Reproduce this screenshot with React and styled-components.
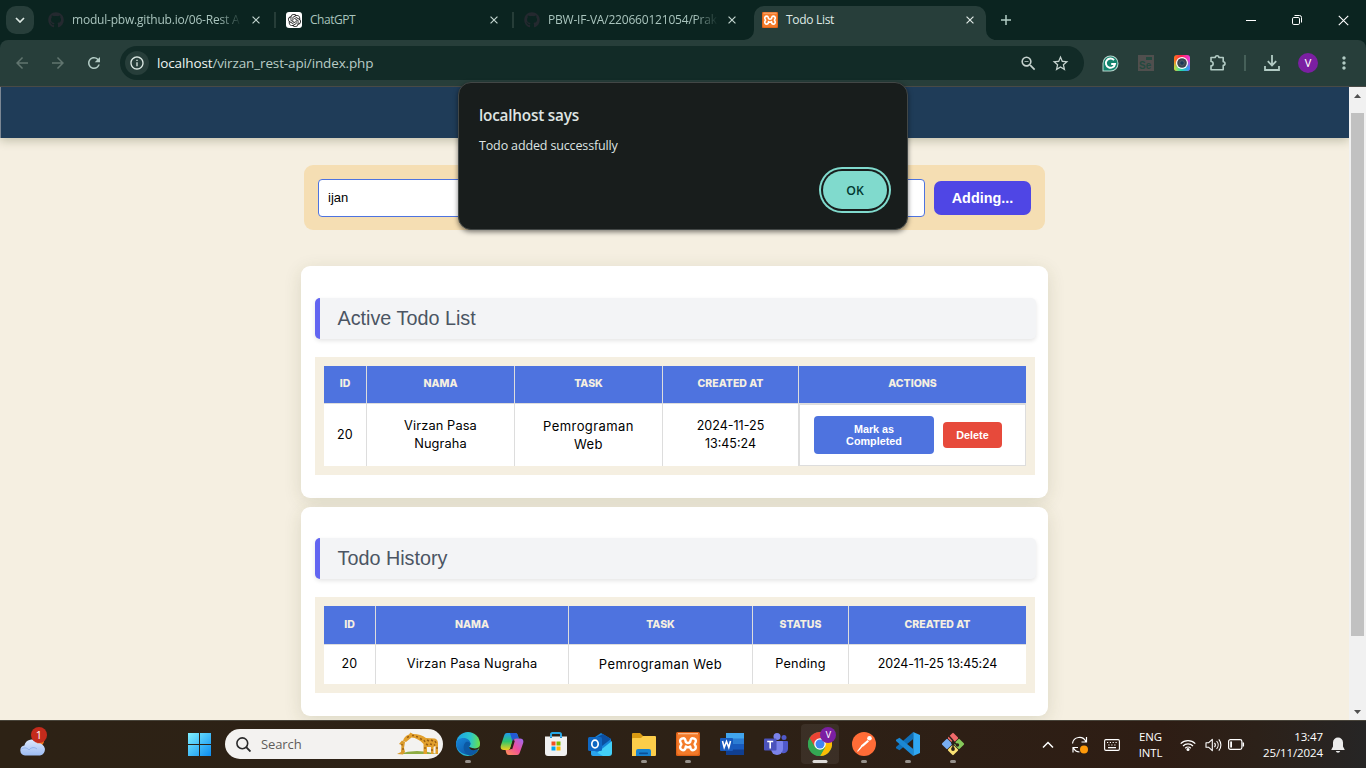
import React from "react";
import styled, { createGlobalStyle, css } from "styled-components";
import { FaGithub } from "react-icons/fa";
import { SiOpenai } from "react-icons/si";
import {
  MdArrowBack,
  MdArrowForward,
  MdRefresh,
  MdOutlineInfo,
  MdZoomOut,
  MdStarOutline,
  MdMoreVert,
} from "react-icons/md";

const ui = `"Open Sans", "Noto Sans", sans-serif`;
const arial = `"Liberation Sans", Arial, sans-serif`;
const round = `Inter, "Open Sans", sans-serif`;

const GlobalStyle = createGlobalStyle`
  * { box-sizing: border-box; }
  body { margin: 0; overflow: hidden; background: #f5efe1; }
  svg { display: block; flex: none; }
`;

const Screen = styled.div`
  position: relative;
  width: 1366px;
  height: 768px;
  display: flex;
  flex-direction: column;
  overflow: hidden;
  font-family: ${ui};
`;

/* ---------- tab strip ---------- */

const TabStrip = styled.div`
  height: 40px;
  flex: none;
  display: flex;
  background: #0b2420;
`;

const TabSearch = styled.div`
  width: 28px;
  height: 28px;
  margin: 6px 4px 0 6px;
  border-radius: 10px;
  background: #273e3a;
  display: flex;
  align-items: center;
  justify-content: center;
`;

const Tab = styled.div`
  position: relative;
  width: 238px;
  height: 40px;
  padding-left: 10px;
  display: flex;
  align-items: center;
  color: ${(p) => (p.$active ? "#dfe9e5" : "#a9c4bd")};
  ${(p) =>
    p.$divider &&
    css`
      &::after {
        content: "";
        position: absolute;
        right: 0;
        top: 12px;
        width: 2px;
        height: 16px;
        background: #263d38;
      }
    `}
`;

const ActiveShape = styled.svg`
  position: absolute;
  left: -8px;
  top: 6px;
`;

const Favicon = styled.div`
  position: relative;
  width: 16px;
  height: 16px;
  border-radius: 3px;
  background: ${(p) => p.$bg || "transparent"};
  color: ${(p) => p.$fg};
  display: flex;
  align-items: center;
  justify-content: center;
`;

const TabTitle = styled.div`
  position: relative;
  width: 170px;
  margin-left: 8px;
  font-size: 12px;
  line-height: 16px;
  letter-spacing: ${(p) => p.$track || "-0.2px"};
  white-space: nowrap;
  ${(p) =>
    p.$fade &&
    css`
      mask-image: linear-gradient(90deg, #000 146px, transparent 170px);
    `}
`;

const TabClose = styled.div`
  position: relative;
  width: 16px;
  margin-left: 6px;
  display: flex;
  justify-content: center;
`;

const NewTab = styled.div`
  width: 32px;
  display: flex;
  align-items: center;
  justify-content: center;
`;

const WindowControls = styled.div`
  margin-left: auto;
  display: flex;
`;

const WindowButton = styled.div`
  width: 46px;
  height: 40px;
  display: flex;
  align-items: center;
  justify-content: center;
`;

/* ---------- toolbar ---------- */

const ToolbarBack = styled.div`
  height: 47px;
  flex: none;
  background: #0b2420;
`;

const Toolbar = styled.div`
  height: 47px;
  padding-left: 4px;
  display: flex;
  background: #273e3a;
  border-bottom: 1px solid #484a46;
  border-radius: 8px 8px 0 0;
`;

const ToolButton = styled.div`
  width: 36px;
  height: 46px;
  display: flex;
  align-items: center;
  justify-content: center;
  color: ${(p) => (p.$dim ? "#61756f" : "#b2cbc4")};
`;

const Omnibox = styled.div`
  width: 964px;
  height: 34px;
  margin: 6px 8px 0;
  padding: 0 8px 0 5px;
  border-radius: 17px;
  background: #122b27;
  display: flex;
  align-items: center;
`;

const SiteInfo = styled.div`
  width: 24px;
  height: 24px;
  border-radius: 50%;
  background: #273e3a;
  color: #dbe8e3;
  display: flex;
  align-items: center;
  justify-content: center;
`;

const Url = styled.div`
  flex: 1;
  margin-left: 8px;
  font-size: 13.5px;
  letter-spacing: -0.13px;
  color: #b9ccc6;
  b {
    font-weight: 400;
    color: #eef5f2;
  }
`;

const OmniIcon = styled.div`
  width: 32px;
  display: flex;
  justify-content: center;
  color: #c6d3cf;
`;

const ToolDivider = styled.div`
  width: 18px;
  display: flex;
  align-items: center;
  justify-content: center;
  &::before {
    content: "";
    width: 2px;
    height: 16px;
    background: #466059;
  }
`;

const SeleniumBadge = styled.div`
  position: relative;
  width: 16px;
  height: 16px;
  padding: 4px 0 0 1px;
  background: #504f4e;
  color: #24493f;
  font: 700 10px/13px ${arial};
  &::after {
    content: "";
    position: absolute;
    right: 2px;
    top: 2px;
    width: 6px;
    height: 3px;
    background: #24493f;
  }
`;

const Avatar = styled.div`
  width: ${(p) => p.$size}px;
  height: ${(p) => p.$size}px;
  border-radius: 50%;
  background: #7b1fa2;
  color: #fff;
  font: 400 ${(p) => p.$font}px/1 Roboto, sans-serif;
  display: flex;
  align-items: center;
  justify-content: center;
`;

/* ---------- page ---------- */

const Viewport = styled.div`
  height: 633px;
  flex: none;
  display: flex;
  overflow: hidden;
  background: #f5efe1;
`;

const Page = styled.div`
  width: 1349px;
  display: flex;
  flex-direction: column;
  align-items: center;
`;

const PageHeader = styled.div`
  width: 1349px;
  height: 51px;
  flex: none;
  background: #1f3c58;
  border-left: 1px solid #7b8794;
  box-shadow: 0 3px 9px rgba(50, 60, 20, 0.25);
`;

const TodoForm = styled.div`
  width: 741px;
  height: 65px;
  flex: none;
  margin-top: 27px;
  padding: 14px;
  display: flex;
  border-radius: 9px;
  background: #f5deb3;
`;

const TodoInput = styled.div`
  width: 607px;
  height: 38px;
  padding-left: 9px;
  border: 1px solid #4e73df;
  border-radius: 4px;
  background: #fff;
  color: #000;
  font: 400 13px/35px ${arial};
`;

const AddButton = styled.div`
  width: 97px;
  height: 34px;
  margin: 2px 0 0 9px;
  border-radius: 7px;
  background: #4f46e5;
  color: #fff;
  font: 700 14.4px/34px ${arial};
  text-align: center;
`;

const Card = styled.section`
  width: 747px;
  height: ${(p) => p.$height}px;
  flex: none;
  margin-top: ${(p) => p.$gap}px;
  padding: ${(p) => p.$top}px 0 0 14px;
  border-radius: 9px;
  background: #fff;
  box-shadow: 0 4px 18px rgba(70, 80, 30, 0.14);
`;

const SectionTitle = styled.h2`
  width: 721px;
  height: 41px;
  margin: 0 0 18px;
  padding-left: 17.5px;
  border-left: 5px solid #6366f1;
  border-radius: 5px;
  background: #f3f4f6;
  box-shadow: 0 2px 4px rgba(0, 0, 0, 0.1);
  color: #4b5563;
  font: 400 19.8px/41px ${arial};
`;

const TableFrame = styled.div`
  width: 720px;
  padding: 9px;
  background: #f5efe1;
`;

const TableRow = styled.div`
  display: grid;
  grid-template-columns: ${(p) => p.$cols};
  height: ${(p) => p.$height}px;
  background: #fff;
`;

const HeadCell = styled.div`
  display: flex;
  align-items: center;
  justify-content: center;
  padding-bottom: ${(p) => p.$lift}px;
  background: #4e73df;
  border-bottom: 1px solid #ddd;
  color: #f5efe1;
  font: 800 10.5px/16px ${round};
  & + & {
    border-left: 1px solid #ddd;
  }
`;

const Cell = styled.div`
  display: flex;
  align-items: center;
  justify-content: center;
  padding-bottom: ${(p) => p.$lift}px;
  text-align: center;
  color: #000;
  font: 400 ${(p) => p.$size || 12.5}px/18px ${round};
  letter-spacing: ${(p) => p.$track || 0}px;
  white-space: pre-line;
  & + & {
    border-left: 1px solid #ddd;
  }
`;

const ActionArea = styled.div`
  width: 100%;
  height: 100%;
  padding: 0 23px 0 14px;
  border: 1px solid #ddd;
  display: flex;
  align-items: center;
  justify-content: space-between;
`;

const ActionButton = styled.div`
  width: ${(p) => p.$width}px;
  padding: 7px 12px;
  border-radius: 4px;
  background: ${(p) => p.$bg};
  color: #fff;
  font: 700 10.8px/12px ${arial};
  text-align: center;
`;

const Scrollbar = styled.div`
  width: 17px;
  background: #f1f1f1;
  display: flex;
  flex-direction: column;
  align-items: center;
`;

const ScrollArrow = styled.div`
  height: ${(p) => p.$height}px;
  padding-bottom: ${(p) => p.$lift || 0}px;
  display: flex;
  align-items: center;
`;

const Thumb = styled.div`
  width: 13px;
  height: 523px;
  margin-bottom: auto;
  background: #c1c1c1;
`;

/* ---------- alert ---------- */

const Dialog = styled.div`
  position: absolute;
  left: 458px;
  top: 82px;
  width: 450px;
  height: 148px;
  padding: 22px 20px;
  border: 1px solid #424746;
  border-radius: 13px;
  background: #181d1c;
  box-shadow: 0 2px 5px rgba(0, 0, 0, 0.5);
  display: flex;
  flex-direction: column;
`;

const DialogTitle = styled.div`
  color: #dfe4e2;
  font-size: 15.3px;
  line-height: 20px;
  font-weight: 600;
  letter-spacing: -0.2px;
`;

const DialogText = styled.div`
  margin-top: 12px;
  color: #dfe4e2;
  font-size: 12.5px;
  line-height: 18px;
  letter-spacing: -0.14px;
`;

const OkButton = styled.div`
  align-self: flex-end;
  width: 64px;
  height: 38px;
  margin-top: 16px;
  border-radius: 19px;
  background: #80dacd;
  box-shadow: 0 0 0 2px #181d1c, 0 0 0 4px #80dacd;
  color: #003730;
  font-size: 12.3px;
  font-weight: 600;
  line-height: 39px;
  text-align: center;
`;

/* ---------- taskbar ---------- */

const Taskbar = styled.div`
  height: 48px;
  flex: none;
  display: flex;
  border-top: 1px solid #48443a;
  background: linear-gradient(90deg, #2d2215 0%, #2d2116 55%, #2e1d14 85%, #2c2119 92%, #262525 100%);
`;

const Weather = styled.div`
  position: relative;
  width: 168px;
  padding: 14px 0 0 19px;
`;

const Notice = styled.div`
  position: absolute;
  left: 31px;
  top: 6px;
  width: 16px;
  height: 16px;
  border-radius: 50%;
  background: #c42b1c;
  color: #fff;
  font: 400 11px/16px ${ui};
  text-align: center;
`;

const StartButton = styled.div`
  width: 57px;
  padding: 12px 0 0 20px;
`;

const SearchBox = styled.div`
  width: 218px;
  height: 30px;
  margin: 8px 2px 0 0;
  padding: 0 4px 0 11px;
  border-radius: 15px;
  background: #f3f2f0;
  display: flex;
  align-items: center;
  color: #5f5d5b;
  font-size: 13px;
  line-height: 30px;
  letter-spacing: -0.1px;
`;

const SearchLabel = styled.span`
  flex: 1;
  margin-left: 10px;
`;

const TaskSlot = styled.div`
  width: 44.1px;
  padding: 3px 0 0 1px;
  display: flex;
  justify-content: center;
`;

const TaskTile = styled.div`
  position: relative;
  width: 38px;
  height: 40px;
  border-radius: 4px;
  background: ${(p) => (p.$active ? "rgba(255,255,255,.07)" : "transparent")};
  display: flex;
  align-items: center;
  justify-content: center;
  &::after {
    content: "";
    position: absolute;
    bottom: 1px;
    left: 50%;
    width: ${(p) => (p.$active ? 15 : p.$open ? 6 : 0)}px;
    height: 3px;
    border-radius: 2px;
    background: ${(p) => (p.$active ? "#dedbd8" : "#96918b")};
    transform: translateX(-50%);
  }
`;

const ProfileMark = styled.div`
  position: absolute;
  right: 3px;
  top: 3px;
`;

const Tray = styled.div`
  margin-left: auto;
  padding-right: 13px;
  display: flex;
  align-items: center;
  color: #fff;
`;

const TraySlot = styled.div`
  width: ${(p) => p.$width}px;
  display: flex;
  justify-content: center;
`;

const TrayText = styled.div`
  width: ${(p) => p.$width}px;
  text-align: ${(p) => p.$align};
  font-size: ${(p) => p.$size || 11}px;
  line-height: 16px;
  letter-spacing: -0.1px;
`;

/* ---------- drawings ---------- */

const Cross = ({ size = 8, color = "#c3d5cf", width = 1.5 }) => (
  <svg width={size} height={size} viewBox="0 0 10 10">
    <path d="M.7.7l8.6 8.6M9.3.7L.7 9.3" stroke={color} strokeWidth={width} />
  </svg>
);

const XamppIcon = ({ size }) => (
  <svg width={size} height={size} viewBox="0 0 24 24">
    <rect width="24" height="24" rx="1.5" fill="#de6218" />
    <rect x="1.2" y="1.2" width="21.6" height="21.6" rx="2" fill="#f47b2a" />
    <rect x="2" y="1" width="20" height="1.300" fill="#fab98a" />
    <path
      d="M7.500 6.200C4.500 6.200 3.700 8.300 4.300 10C4.600 11 5.400 11.400 5.400 12.200C5.400 13 4.600 13.300 4.300 14.300C3.800 16.200 4.800 18.200 7 18.200C9.600 18.200 9.600 16.200 9.800 14.400C11 15.400 13 15.400 14.200 14.400C14.400 16.200 14.400 18.200 17 18.200C19.200 18.200 20.200 16.200 19.700 14.300C19.400 13.300 18.600 13 18.600 12.200C18.600 11.400 19.400 11 19.700 10C20.300 8.300 19.500 6.200 16.500 6.200C14.500 6.200 14.600 8.300 14.200 10C13 11 11 11 9.800 10C9.400 8.300 9.500 6.200 7.500 6.200Z"
      fill="none"
      stroke="#fff"
      strokeWidth="2.400"
      strokeLinejoin="round"
    />
  </svg>
);

const GrammarlyIcon = () => (
  <svg width="17" height="17" viewBox="0 0 17 17">
    <path d="M8.5.5a8 8 0 0 1 8 8a8 8 0 0 1-8 8h-8v-8a8 8 0 0 1 8-8z" fill="#b9d6ce" />
    <path d="M8.5 1.5a7 7 0 0 1 0 14h-7v-7a7 7 0 0 1 7-7z" fill="#13836d" />
    <path d="M12 5.2A4.6 4.6 0 1 0 13 9H9.200" fill="none" stroke="#fff" strokeWidth="1.9" />
  </svg>
);

const CameraIcon = () => (
  <svg width="16" height="16" viewBox="0 0 16 16">
    <defs>
      <linearGradient id="camTop" x1="0" y1="0" x2="1" y2="0">
        <stop offset="0" stopColor="#ff7a1a" />
        <stop offset=".45" stopColor="#ff1f4f" />
        <stop offset="1" stopColor="#f03ae0" />
      </linearGradient>
      <linearGradient id="camBottom" x1="0" y1="0" x2="1" y2="0">
        <stop offset="0" stopColor="#c8e03a" />
        <stop offset=".45" stopColor="#25d8b0" />
        <stop offset="1" stopColor="#3d8bff" />
      </linearGradient>
      <linearGradient id="camFade" x1="0" y1="0" x2="0" y2="1">
        <stop offset=".3" stopColor="#fff" stopOpacity="0" />
        <stop offset=".8" stopColor="#fff" />
      </linearGradient>
      <mask id="camMask">
        <rect width="16" height="16" fill="url(#camFade)" />
      </mask>
    </defs>
    <rect width="16" height="16" rx="3" fill="url(#camTop)" />
    <rect width="16" height="16" rx="3" fill="url(#camBottom)" mask="url(#camMask)" />
    <circle cx="8" cy="8" r="6" fill="#fff" />
    <circle cx="8" cy="8" r="4.800" fill="#3a4450" />
    <circle cx="8" cy="8" r="2.300" fill="#1c3858" stroke="#66707c" strokeWidth=".6" />
  </svg>
);

const PuzzleIcon = () => (
  <svg width="18" height="18" viewBox="0 0 18 18">
    <path
      d="M2 3.500h4.300a1.800 1.800 0 0 1 3.600 0h4.300v4.300a1.800 1.800 0 0 1 0 3.600v4.300H2v-3.900a2.100 2.100 0 0 0 0-4.300z"
      fill="none"
      stroke="#b2cbc4"
      strokeWidth="1.600"
      strokeLinejoin="round"
    />
  </svg>
);

const WeatherIcon = () => (
  <svg width="26" height="22" viewBox="0 0 26 22">
    <defs>
      <linearGradient id="cloud" x1="0" y1="0" x2="0" y2="1">
        <stop offset="0" stopColor="#dce8fd" />
        <stop offset="1" stopColor="#9dbcf2" />
      </linearGradient>
    </defs>
    <circle cx="20" cy="6" r="5" fill="#f47a1f" />
    <path d="M6 20.5a5 5 0 0 1-.6-9.9A7 7 0 0 1 18.600 8.500a6 6 0 0 1 2.400 12z" fill="url(#cloud)" />
    <path d="M2.500 14c3-2 6-1 7.500 1c2-3 6-3 8-1" fill="none" stroke="#87aae8" strokeWidth=".8" />
  </svg>
);

const WindowsIcon = () => (
  <svg width="23" height="23" viewBox="0 0 23 23">
    <defs>
      <linearGradient id="win" x1="0" y1="0" x2="23" y2="23" gradientUnits="userSpaceOnUse">
        <stop offset="0" stopColor="#7ff0ff" />
        <stop offset="1" stopColor="#0b8cf0" />
      </linearGradient>
    </defs>
    <path d="M0 0h11v11H0zM12 0h11v11H12zM0 12h11v11H0zM12 12h11v11H12z" fill="url(#win)" />
  </svg>
);

const GiraffeArt = () => (
  <svg width="43" height="24" viewBox="0 0 43 24">
    <path d="M3 22q17-6 38 0z" fill="#8dac42" />
    <path d="M1 22l4-2 .5-7-2.500-1 3-3.500L9 10l-1 6 1 4-2 2.500z" fill="#d99a2b" />
    <path d="M7 9q1-5 6-6.500L14.500.5 17 2q8 0 13 4l9 .5q3 1 3 5V22h-2.500v-8l-2 1V22H35v-7h-4V22h-3.500V12Q22 6 15.500 5.500L10 10z" fill="#e2a02c" />
    <path
      d="M16 3.500h2M20 4.500l2 .5M24 6.500l2 1M28 8l1 2M31 8l2 1M35 8l2 1M39 9l1 2M30 12l2 1M34 12l2 .5M38 12.500l1 1M29 15v2M36 17v2M41 15v2M6 12v1.500M7 16v2M11 5.500l2-1"
      stroke="#9a5f14"
      strokeWidth="1.400"
    />
  </svg>
);

const EdgeIcon = () => (
  <svg width="24" height="24" viewBox="0 0 24 24">
    <defs>
      <linearGradient id="edgeA" x1="0" y1=".3" x2="1" y2=".4">
        <stop offset="0" stopColor="#1ba1e8" />
        <stop offset=".6" stopColor="#2bc6c9" />
        <stop offset="1" stopColor="#6be04a" />
      </linearGradient>
      <linearGradient id="edgeB" x1="0" y1="0" x2="1" y2="1">
        <stop offset="0" stopColor="#1787d9" />
        <stop offset="1" stopColor="#0d4c9c" />
      </linearGradient>
    </defs>
    <circle cx="12" cy="12" r="12" fill="url(#edgeA)" />
    <path d="M0 12c0-4 3.600-6 7.500-6c4 0 7 2.500 7 5.500c0 1.500-1.500 2-1.500 3.500c0 2.500 4.500 4 9.500 1.500A12 12 0 0 1 0 12z" fill="url(#edgeB)" />
    <path d="M9 11c-3 4-1 11 5 12.800a12 12 0 0 0 8.500-6.300c-5 2.500-9.500 1-9.500-2c0-1.500 1.500-2 1.500-4C12.500 9 10 9.500 9 11z" fill="#0c59a4" />
    <path d="M13 15c0 2.800 4.500 4.500 9.500 1.700c1.800-1.200 1.500-3 1.500-3c-1 2-4 3-6.500 2.600c-2-.3-3.500-1.300-4.500-1.300z" fill="#2d2116" />
  </svg>
);

const CopilotIcon = () => (
  <svg width="24" height="24" viewBox="0 0 24 24">
    <defs>
      <linearGradient id="copA" x1="0" y1="0" x2="0" y2="1">
        <stop offset="0" stopColor="#1e9bf0" />
        <stop offset=".5" stopColor="#2fc56c" />
        <stop offset="1" stopColor="#f4cf1b" />
      </linearGradient>
      <linearGradient id="copB" x1="1" y1="0" x2="0" y2="1">
        <stop offset="0" stopColor="#9a6bf6" />
        <stop offset=".5" stopColor="#ef4f9a" />
        <stop offset="1" stopColor="#ff9450" />
      </linearGradient>
    </defs>
    <path d="M7 1h8c2 0 2.500 1 3 3l.8 2.500h-3c-2 0-2.800 1-3.300 3l-1.800 6c-.5 1.700-1.200 2.500-3 2.500H4c-3 0-4-2-3-5L4 4c.6-2 1.300-3 3-3z" fill="url(#copA)" />
    <path d="M10 1h5c2 0 2.500 1 3 3l.8 2.500h-3c-2 0-2.800 1-3.300 3z" fill="#2359d4" />
    <path d="M17 23H9c-2 0-2.500-1-3-3l-.5-2h3c2 0 2.700-1 3.200-3l1.800-6c.5-1.700 1.200-2.500 3-2.500H20c3 0 4 2 3 5L20 20c-.6 2-1.300 3-3 3z" fill="url(#copB)" />
    <path d="M13.800 8.500l-2.600 8.500" stroke="#2d2116" strokeWidth="2.200" />
  </svg>
);

const StoreIcon = () => (
  <svg width="24" height="24" viewBox="0 0 24 24">
    <path d="M7 6V2.500A1.500 1.500 0 0 1 8.500 1h7A1.500 1.500 0 0 1 17 2.500V6" fill="none" stroke="#27a8e8" strokeWidth="2" />
    <path d="M1 4.500h22V21a3 3 0 0 1-3 3H4a3 3 0 0 1-3-3z" fill="#f1f1f1" />
    <path d="M7 4.500V6M17 4.500V6" stroke="#1c93d6" strokeWidth="2" />
    <path d="M7.500 9.500h4v4h-4z" fill="#f25022" />
    <path d="M12.500 9.500h4v4h-4z" fill="#7fba00" />
    <path d="M7.500 14.500h4v4h-4z" fill="#00a4ef" />
    <path d="M12.500 14.500h4v4h-4z" fill="#ffb900" />
  </svg>
);

const OutlookIcon = () => (
  <svg width="24" height="24" viewBox="0 0 24 24">
    <path d="M4 7l9-6 10 6v14a2 2 0 0 1-2 2H6a2 2 0 0 1-2-2z" fill="#1683d8" />
    <path d="M9 5l6-3 8 5-9 7z" fill="#0c4fa0" />
    <path d="M24 9v12a3 3 0 0 1-3 3H5z" fill="#42cff8" />
    <path d="M3 17l12 7H5a2 2 0 0 1-2-2z" fill="#2aa4ee" />
    <rect x="0" y="5" width="14" height="14" rx="1.500" fill="#0f67c2" />
    <ellipse cx="7" cy="12" rx="3.200" ry="3.800" fill="none" stroke="#fff" strokeWidth="1.700" />
  </svg>
);

const FolderIcon = () => (
  <svg width="24" height="24" viewBox="0 0 24 24">
    <path d="M0 2a1 1 0 0 1 1-1h7l3 3v4H0z" fill="#d99a12" />
    <path d="M1 6h8l2-2h12a1 1 0 0 1 1 1v18a1 1 0 0 1-1 1H0V7a1 1 0 0 1 1-1z" fill="#fccd4a" />
    <path d="M4 24v-5a2 2 0 0 1 2-2h11a2 2 0 0 1 2 2v5z" fill="#1683d2" />
    <rect x="7" y="20.500" width="9" height="1.700" rx=".8" fill="#0c4f96" />
  </svg>
);

const WordIcon = () => (
  <svg width="24" height="24" viewBox="0 0 24 24">
    <rect x="6" y="1" width="18" height="6" fill="#41a5ee" />
    <rect x="6" y="6.500" width="18" height="6" fill="#2b7cd3" />
    <rect x="6" y="12" width="18" height="6" fill="#185abd" />
    <rect x="6" y="17.500" width="18" height="5.500" fill="#103f91" />
    <rect x="0" y="6" width="13" height="13" rx="1" fill="#185abd" />
    <path d="M2.500 9l1.700 6.500L6.500 9.500l2.300 6L10.500 9" fill="none" stroke="#fff" strokeWidth="1.600" />
  </svg>
);

const TeamsIcon = () => (
  <svg width="24" height="24" viewBox="0 0 24 24">
    <circle cx="13" cy="4.500" r="3.500" fill="#7b83eb" />
    <circle cx="20" cy="5.500" r="2.500" fill="#5059c9" />
    <path d="M16 9h7a1 1 0 0 1 1 1v7a4.500 4.500 0 0 1-6 4z" fill="#5059c9" />
    <path d="M7 9h11a1 1 0 0 1 1 1v7a6 6 0 0 1-12 0z" fill="#7b83eb" />
    <rect x="0" y="6.500" width="12.500" height="12" rx="1" fill="#4b53bc" />
    <path d="M3.200 9.500h6M6.200 9.500v7" stroke="#fff" strokeWidth="1.600" />
  </svg>
);

const ChromeIcon = () => (
  <svg width="24" height="24" viewBox="0 0 24 24">
    <circle cx="12" cy="12" r="12" fill="#34a853" />
    <path d="M1.600 6A12 12 0 0 1 22.400 6H12L6.800 15z" fill="#ea4335" />
    <path d="M22.400 6A12 12 0 0 1 12 24l5.200-9L12 6z" fill="#fbbc04" />
    <path d="M1.600 6A12 12 0 0 0 12 24l5.200-9H6.800z" fill="#34a853" />
    <circle cx="12" cy="12" r="5.800" fill="#fff" />
    <circle cx="12" cy="12" r="4.500" fill="#4285f4" />
  </svg>
);

const PostmanIcon = () => (
  <svg width="24" height="24" viewBox="0 0 24 24">
    <circle cx="12" cy="12" r="12" fill="#ff6c37" />
    <circle cx="17.500" cy="6.200" r="2.300" fill="#fff" />
    <path d="M15.500 8L9 13.500l1.700 1.500L17 9.400z" fill="#fff" />
    <path d="M10 13.500L5.500 19.500M10 14.500l-3 3.500" stroke="#fff" strokeWidth="1.100" />
  </svg>
);

const VsCodeIcon = () => (
  <svg width="24" height="24" viewBox="0 0 24 24">
    <path d="M17.200 0L24 3v18l-6.800 3z" fill="#2fa7f2" />
    <path d="M17.200 0v7L3.500 18.200 0 16.200v-1.200z" fill="#0f6fb8" />
    <path d="M17.200 24v-7L3.500 5.800 0 7.800V9z" fill="#1b88d4" />
  </svg>
);

const GitBashIcon = () => (
  <svg width="24" height="24" viewBox="0 0 24 24">
    <rect x="8.100" y="2.100" width="7.800" height="7.800" rx="1" transform="rotate(45 12 6)" fill="#f06a6a" />
    <rect x="2.100" y="8.100" width="7.800" height="7.800" rx="1" transform="rotate(45 6 12)" fill="#78aef2" />
    <rect x="14.100" y="8.100" width="7.800" height="7.800" rx="1" transform="rotate(45 18 12)" fill="#86c95a" />
    <rect x="8.100" y="14.100" width="7.800" height="7.800" rx="1" transform="rotate(45 12 18)" fill="#fbe274" />
    <path d="M8 4l4 4.500V18M12 9l4.500 4.500" fill="none" stroke="#2c2118" strokeWidth="1.500" />
    <circle cx="12" cy="11" r="1.900" fill="#2c2118" />
    <circle cx="12" cy="17" r="1.900" fill="#2c2118" />
    <circle cx="16.500" cy="13" r="1.700" fill="#2c2118" />
  </svg>
);

const ChevronUp = () => (
  <svg width="12" height="8" viewBox="0 0 12 8">
    <path d="M1 6.500l5-5 5 5" fill="none" stroke="#fff" strokeWidth="1.500" />
  </svg>
);

const SyncIcon = () => (
  <svg width="18" height="18" viewBox="0 0 18 18">
    <path d="M1.500 7.500A7 7 0 0 1 14.800 5.500M15.500 1v5h-5M2 16.500v-5h5M2.500 12a7 7 0 0 0 6 4" fill="none" stroke="#fff" strokeWidth="1.200" />
    <circle cx="13" cy="13.500" r="4" fill="#ff9a0a" />
  </svg>
);

const KeyboardIcon = () => (
  <svg width="16" height="12" viewBox="0 0 16 12">
    <rect x=".6" y=".6" width="14.800" height="10.800" rx="1.300" fill="none" stroke="#fff" strokeWidth="1.100" />
    <path d="M3 3.500h1.200M5.800 3.500H7M8.600 3.500h1.200M11.500 3.500h1.200M4.300 6h1.200M7.300 6h1.200M10.300 6h1.200M4 8.700h8" stroke="#fff" strokeWidth="1.200" />
  </svg>
);

const WifiIcon = () => (
  <svg width="16" height="12" viewBox="0 0 16 12">
    <path d="M.7 4.700a10.300 10.300 0 0 1 14.600 0M3 7a7 7 0 0 1 10 0M5.200 9.200a4 4 0 0 1 5.600 0" fill="none" stroke="#fff" strokeWidth="1.200" />
    <circle cx="8" cy="10.400" r="1.500" fill="#fff" />
  </svg>
);

const VolumeIcon = () => (
  <svg width="17" height="14" viewBox="0 0 17 14">
    <path d="M1 4.800h2.500L7.300 1.300v11.400L3.500 9.200H1zM9.500 4.800a3.500 3.500 0 0 1 0 4.400M11.600 3a6 6 0 0 1 0 8M13.800 1.300a8.800 8.800 0 0 1 0 11.400" fill="none" stroke="#fff" strokeWidth="1.100" strokeLinejoin="round" />
  </svg>
);

const BatteryIcon = () => (
  <svg width="17" height="11" viewBox="0 0 17 11">
    <rect x=".6" y=".6" width="13.300" height="9.800" rx="1.800" fill="none" stroke="#fff" strokeWidth="1.200" />
    <rect x="2.200" y="2.500" width="1.800" height="6" fill="#fff" />
    <path d="M15.300 3.500v4" stroke="#fff" strokeWidth="1.500" />
  </svg>
);

const BellIcon = () => (
  <svg width="14" height="16" viewBox="0 0 14 16">
    <path d="M7 .5a5 5 0 0 1 5 5v4l1.600 3v.6H.4v-.6L2 9.500v-4a5 5 0 0 1 5-5zM4.800 14h4.400a2.300 2.300 0 0 1-4.400 0z" fill="#ececec" />
  </svg>
);

const ScrollTriangle = ({ down }) => (
  <svg width="7" height="4" viewBox="0 0 7 4">
    <path d={down ? "M0 0h7L3.500 4z" : "M0 4h7L3.500 0z"} fill="#505050" />
  </svg>
);

/* ---------- data ---------- */

const tasks = [
  { icon: <EdgeIcon />, open: true },
  { icon: <CopilotIcon /> },
  { icon: <StoreIcon /> },
  { icon: <OutlookIcon /> },
  { icon: <FolderIcon />, open: true },
  { icon: <XamppIcon size={24} />, open: true },
  { icon: <WordIcon /> },
  { icon: <TeamsIcon /> },
  { icon: <ChromeIcon />, active: true },
  { icon: <PostmanIcon />, open: true },
  { icon: <VsCodeIcon />, open: true },
  { icon: <GitBashIcon />, open: true },
];

const activeCells = [
  { body: "20", track: 0.2 },
  { body: "Virzan Pasa\nNugraha", track: 0.12, size: 12.8 },
  { body: "Pemrograman\nWeb", track: 0.42, size: 13 },
  { body: "2024-11-25\n13:45:24", track: 0 },
  {
    body: (
      <ActionArea>
        <ActionButton $width={120} $bg="#4e73df">Mark as{"\n"}Completed</ActionButton>
        <ActionButton $width={59} $bg="#e74a3b">Delete</ActionButton>
      </ActionArea>
    ),
  },
];

const historyCells = [
  { body: "20", track: 0.2 },
  { body: "Virzan Pasa Nugraha", track: 0.2, size: 12.8 },
  { body: "Pemrograman Web", track: 0.38, size: 13 },
  { body: "Pending", track: 0.22, size: 12.7 },
  { body: "2024-11-25 13:45:24", track: -0.14 },
];

function TodoTable({ cols, heads, cells, headHeight, bodyHeight, headLift, bodyLift }) {
  return (
    <TableFrame>
      <TableRow $cols={cols} $height={headHeight}>
        {heads.map((h) => (
          <HeadCell key={h} $lift={headLift}>{h}</HeadCell>
        ))}
      </TableRow>
      <TableRow $cols={cols} $height={bodyHeight}>
        {cells.map((c, i) => (
          <Cell key={i} $track={c.track} $size={c.size} $lift={bodyLift}>{c.body}</Cell>
        ))}
      </TableRow>
    </TableFrame>
  );
}

function BrowserChrome() {
  return (
    <>
      <TabStrip>
        <TabSearch>
          <svg width="10" height="6" viewBox="0 0 10 6">
            <path d="M1 1l4 4 4-4" fill="none" stroke="#dce8e3" strokeWidth="1.700" />
          </svg>
        </TabSearch>
        <Tab $divider>
          <Favicon $fg="#24292f"><FaGithub size={16} /></Favicon>
          <TabTitle $fade>modul-pbw.github.io/06-Rest A</TabTitle>
          <TabClose><Cross /></TabClose>
        </Tab>
        <Tab $divider>
          <Favicon $bg="#fff" $fg="#222"><SiOpenai size={13} /></Favicon>
          <TabTitle $track="-0.45px">ChatGPT</TabTitle>
          <TabClose><Cross /></TabClose>
        </Tab>
        <Tab>
          <Favicon $fg="#24292f"><FaGithub size={16} /></Favicon>
          <TabTitle $fade>PBW-IF-VA/220660121054/Prak</TabTitle>
          <TabClose><Cross /></TabClose>
        </Tab>
        <Tab $active>
          <ActiveShape width="250" height="34" viewBox="0 0 250 34">
            <path d="M0 34a10 10 0 0 0 10-10V10A10 10 0 0 1 20 0H232a10 10 0 0 1 10 10V24a10 10 0 0 0 10 10z" fill="#273e3a" />
          </ActiveShape>
          <Favicon><XamppIcon size={16} /></Favicon>
          <TabTitle $track="-0.3px">Todo List</TabTitle>
          <TabClose><Cross color="#dfe9e5" /></TabClose>
        </Tab>
        <NewTab>
          <svg width="10" height="10" viewBox="0 0 10 10">
            <path d="M5 0v10M0 5h10" stroke="#b2cbc4" strokeWidth="1.500" />
          </svg>
        </NewTab>
        <WindowControls>
          <WindowButton>
            <svg width="10" height="1"><rect width="10" height="1" fill="#fff" /></svg>
          </WindowButton>
          <WindowButton>
            <svg width="10" height="10" viewBox="0 0 10 10">
              <rect x=".5" y="2.500" width="7" height="7" rx="1.300" fill="none" stroke="#fff" />
              <path d="M2.500.5h5a2 2 0 0 1 2 2v5" fill="none" stroke="#fff" />
            </svg>
          </WindowButton>
          <WindowButton><Cross size={11} color="#fff" width={1} /></WindowButton>
        </WindowControls>
      </TabStrip>
      <ToolbarBack>
        <Toolbar>
          <ToolButton $dim><MdArrowBack size={18} /></ToolButton>
          <ToolButton $dim><MdArrowForward size={18} /></ToolButton>
          <ToolButton><MdRefresh size={18} /></ToolButton>
          <Omnibox>
            <SiteInfo><MdOutlineInfo size={16} /></SiteInfo>
            <Url><b>localhost</b>/virzan_rest-api/index.php</Url>
            <OmniIcon><MdZoomOut size={19} /></OmniIcon>
            <OmniIcon><MdStarOutline size={19} /></OmniIcon>
          </Omnibox>
          <ToolButton><GrammarlyIcon /></ToolButton>
          <ToolButton><SeleniumBadge>Se</SeleniumBadge></ToolButton>
          <ToolButton><CameraIcon /></ToolButton>
          <ToolButton><PuzzleIcon /></ToolButton>
          <ToolDivider />
          <ToolButton>
            <svg width="16" height="16" viewBox="0 0 16 16">
              <path d="M8 0v10M3.800 6.200L8 10.400l4.200-4.200M1 11v4h14v-4" fill="none" stroke="#b2cbc4" strokeWidth="1.800" />
            </svg>
          </ToolButton>
          <ToolButton><Avatar $size={20} $font={11}>V</Avatar></ToolButton>
          <ToolButton><MdMoreVert size={20} /></ToolButton>
        </Toolbar>
      </ToolbarBack>
    </>
  );
}

export default function App() {
  return (
    <Screen>
      <GlobalStyle />
      <BrowserChrome />
      <Viewport>
        <Page>
          <PageHeader />
          <TodoForm>
            <TodoInput>ijan</TodoInput>
            <AddButton>Adding...</AddButton>
          </TodoForm>
          <Card $gap={36} $height={232} $top={32}>
            <SectionTitle>Active Todo List</SectionTitle>
            <TodoTable
              cols="42px 148px 148px 136px 228px"
              headHeight={38}
              bodyHeight={62}
              headLift={2}
              bodyLift={0}
              heads={["ID", "NAMA", "TASK", "CREATED AT", "ACTIONS"]}
              cells={activeCells}
            />
          </Card>
          <Card $gap={9} $height={209} $top={31}>
            <SectionTitle>Todo History</SectionTitle>
            <TodoTable
              cols="51px 193px 184px 96px 178px"
              headHeight={39}
              bodyHeight={39}
              headLift={1}
              bodyLift={2}
              heads={["ID", "NAMA", "TASK", "STATUS", "CREATED AT"]}
              cells={historyCells}
            />
          </Card>
        </Page>
        <Scrollbar>
          <ScrollArrow $height={26} $lift={8}><ScrollTriangle /></ScrollArrow>
          <Thumb />
          <ScrollArrow $height={17}><ScrollTriangle down /></ScrollArrow>
        </Scrollbar>
      </Viewport>
      <Taskbar>
        <Weather>
          <WeatherIcon />
          <Notice>1</Notice>
        </Weather>
        <StartButton><WindowsIcon /></StartButton>
        <SearchBox>
          <svg width="15" height="15" viewBox="0 0 15 15">
            <circle cx="6.300" cy="6.300" r="5.400" fill="none" stroke="#2a2a2a" strokeWidth="1.600" />
            <path d="M10.200 10.200l4.300 4.300" stroke="#2a2a2a" strokeWidth="1.900" />
          </svg>
          <SearchLabel>Search</SearchLabel>
          <GiraffeArt />
        </SearchBox>
        {tasks.map((t, i) => (
          <TaskSlot key={i}>
            <TaskTile $open={t.open} $active={t.active}>
              {t.icon}
              {t.active && (
                <ProfileMark><Avatar $size={16} $font={9}>V</Avatar></ProfileMark>
              )}
            </TaskTile>
          </TaskSlot>
        ))}
        <Tray>
          <TraySlot $width={32}><ChevronUp /></TraySlot>
          <TraySlot $width={32}><SyncIcon /></TraySlot>
          <TraySlot $width={32}><KeyboardIcon /></TraySlot>
          <TrayText $width={45} $align="center" $size={11.4}>ENG<br />INTL</TrayText>
          <TraySlot $width={30}><WifiIcon /></TraySlot>
          <TraySlot $width={20}><VolumeIcon /></TraySlot>
          <TraySlot $width={27}><BatteryIcon /></TraySlot>
          <TrayText $width={73} $align="right" $size={11.5}>13:47<br />25/11/2024</TrayText>
          <TraySlot $width={30}><BellIcon /></TraySlot>
        </Tray>
      </Taskbar>
      <Dialog>
        <DialogTitle>localhost says</DialogTitle>
        <DialogText>Todo added successfully</DialogText>
        <OkButton>OK</OkButton>
      </Dialog>
    </Screen>
  );
}
